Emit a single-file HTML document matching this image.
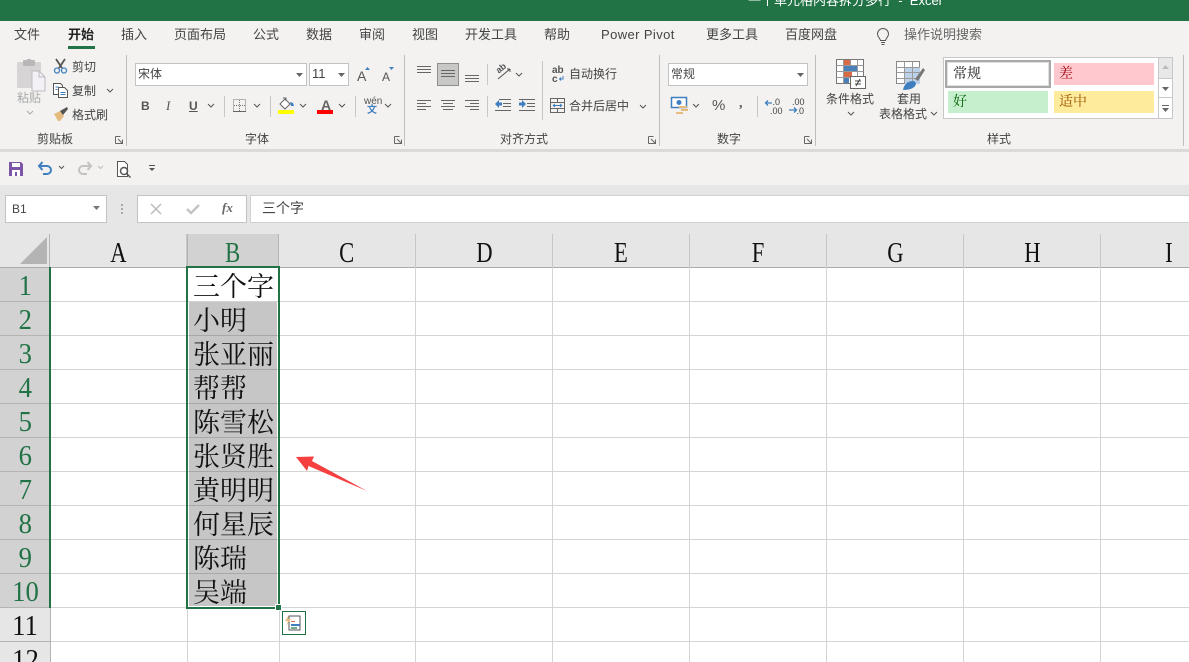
<!DOCTYPE html>
<html lang="zh"><head><meta charset="utf-8"><title>Excel</title>
<style>
*{box-sizing:border-box}
html{margin:0;padding:0;width:1189px;height:662px;overflow:hidden}
body{margin:0;padding:0;width:1189px;height:662px;overflow:hidden;position:relative;background:#fff;font-family:"Liberation Sans","Noto Sans CJK SC",sans-serif}
.a{position:absolute}
.t{position:absolute;font-size:12px;line-height:16px;color:#444;white-space:nowrap;letter-spacing:0}
.tab{position:absolute;top:26px;font-size:13px;line-height:18px;color:#444;white-space:nowrap}
.sep{position:absolute;width:1px;background:#c6c6c6}
.gsep{position:absolute;width:1px;top:55px;height:91px;background:#bdbdbd}
.box{position:absolute;background:#fff;border:1px solid #c3c3c3}
.cell{position:absolute;left:193px;width:88px;font-family:"Noto Serif CJK SC",serif;font-size:27px;line-height:34px;height:34px;color:#111;white-space:nowrap}
.ch{position:absolute;top:234px;height:33px;text-align:center;font-family:"Liberation Serif",serif;font-size:29px;line-height:38px;color:#111;background:#e6e6e6;border-right:1px solid #c6c6c6}
.ch span{display:inline-block;transform:scaleX(.78)}
.rh span{display:inline-block;transform:scaleX(.92)}
.rh{position:absolute;left:0;width:50px;height:34px;text-align:center;font-family:"Liberation Serif",serif;font-size:29px;line-height:36px;color:#111;background:#e6e6e6;border-bottom:1px solid #b4b4b4}
.on{background:#d2d2d2;color:#217346}
.hl{position:absolute;left:50px;width:1139px;height:1px;background:#d4d4d4}
.vl{position:absolute;top:267px;height:395px;width:1px;background:#d4d4d4}
svg{position:absolute;overflow:visible}
</style></head><body>
<div class="a" style="left:0;top:0;width:1189px;height:21px;background:#217346"></div>
<div class="a" style="left:748px;top:-8px;font-size:13px;line-height:18px;color:#fff;white-space:nowrap;font-family:'Liberation Sans','Noto Sans CJK SC',sans-serif">一个单元格内容拆分多行&nbsp; -&nbsp; Excel</div>
<div class="a" style="left:0;top:21px;width:1189px;height:129px;background:#f3f2f1"></div>
<div class="a" style="left:0;top:149px;width:1189px;height:3px;background:#dbdad8"></div>
<div class="a" style="left:0;top:152px;width:1189px;height:33px;background:#f3f2f1"></div>
<div class="a" style="left:0;top:185px;width:1189px;height:49px;background:#e6e6e6"></div>

<div class="tab" style="left:14px">文件</div>
<div class="tab" style="left:68px;color:#222;font-weight:700">开始</div>
<div class="a" style="left:68px;top:46px;width:27px;height:3px;background:#217346"></div>
<div class="tab" style="left:121px">插入</div>
<div class="tab" style="left:174px">页面布局</div>
<div class="tab" style="left:253px">公式</div>
<div class="tab" style="left:306px">数据</div>
<div class="tab" style="left:359px">审阅</div>
<div class="tab" style="left:412px">视图</div>
<div class="tab" style="left:465px">开发工具</div>
<div class="tab" style="left:544px">帮助</div>
<div class="tab" style="left:601px;letter-spacing:.4px">Power Pivot</div>
<div class="tab" style="left:706px">更多工具</div>
<div class="tab" style="left:785px">百度网盘</div>
<div class="tab" style="left:904px;color:#666">操作说明搜索</div>
<svg style="left:876px;top:28px" width="14" height="18" fill="none" stroke="#555"><path d="M4.500 12.500C4 10 1.500 9 1.500 6a5.500 5.500 0 0 1 11 0c0 3-2.500 4-3 6.500zM5 14.500h4M5.500 16.500h3"/></svg>

<div class="gsep" style="left:126px"></div><div class="gsep" style="left:404px"></div><div class="gsep" style="left:659px"></div><div class="gsep" style="left:815px"></div><div class="gsep" style="left:1183px"></div>

<!-- clipboard -->
<svg style="left:16px;top:58px" width="30" height="32"><rect x="1" y="4" width="24" height="26" rx="1" fill="#d6d4d5"/><rect x="7" y="2" width="12" height="6" rx="1" fill="#b9b7b8"/><rect x="11" y="1" width="4" height="3" fill="#b9b7b8"/><path d="M16 13h7l6 6v14H16z" fill="#f3f1f5" stroke="#bdbbc0"/><path d="M23 13v6h6" fill="none" stroke="#bdbbc0"/></svg>
<div class="t" style="left:17px;top:90px;color:#aaa">粘贴</div>
<svg style="left:26px;top:110px" width="9" height="6" fill="none" stroke="#aaa"><path d="M1 1l3 3 3-3"/></svg>
<svg style="left:53px;top:58px" width="16" height="16" fill="none"><path d="M3 1l6 9M12 1L6 10" stroke="#555" stroke-width="1.800"/><circle cx="4" cy="12.500" r="2.500" stroke="#3f7fbf" stroke-width="1.300"/><circle cx="11" cy="12.500" r="2.500" stroke="#3f7fbf" stroke-width="1.300"/></svg>
<div class="t" style="left:72px;top:59px">剪切</div>
<svg style="left:53px;top:83px" width="16" height="15" fill="#fff" stroke="#555"><path d="M.5.500h7l2 2v9H.5z"/><path d="M5.500 4.500h6l3 3v7h-9z"/><path d="M2.500 4h3M2.500 6.500h2M7.500 9.500h5M7.500 11.500h5" stroke="#3f7fbf"/></svg>
<div class="t" style="left:72px;top:83px">复制</div>
<svg style="left:106px;top:88px" width="8" height="5" fill="none" stroke="#555"><path d="M1 1l3 3 3-3"/></svg>
<svg style="left:53px;top:106px" width="16" height="16"><path d="M1 8l6-3 4 5-4 5H5z" fill="#e6bb7e"/><path d="M7 5l7-4 1 2-5 6z" fill="#555"/></svg>
<div class="t" style="left:72px;top:107px">格式刷</div>
<div class="t" style="left:37px;top:131px">剪贴板</div>
<div class="t" style="left:245px;top:131px">字体</div>
<div class="t" style="left:500px;top:131px">对齐方式</div>
<div class="t" style="left:717px;top:131px">数字</div>
<div class="t" style="left:987px;top:131px">样式</div>
<svg style="left:0;top:0" width="1" height="1" fill="none" stroke="#666">
<path d="M115.500 136.500h5M115.500 136.500v7M115.500 143.500h7v-4M118 139l4 4M394.500 136.500h5M394.500 136.500v7M394.500 143.500h7v-4M397 139l4 4M648.500 136.500h5M648.500 136.500v7M648.500 143.500h7v-4M651 139l4 4M804.500 136.500h5M804.500 136.500v7M804.500 143.500h7v-4M807 139l4 4"/></svg>

<!-- font -->
<div class="box" style="left:135px;top:63px;width:172px;height:23px"></div>
<div class="t" style="left:138px;top:66px;font-family:'Noto Sans CJK SC',sans-serif">宋体</div>
<svg style="left:296px;top:73px" width="7" height="4"><path d="M0 0h7L3.500 4z" fill="#666"/></svg>
<div class="box" style="left:309px;top:63px;width:40px;height:23px"></div>
<div class="t" style="left:312px;top:66px;font-size:13px">11</div>
<svg style="left:338px;top:73px" width="7" height="4"><path d="M0 0h7L3.500 4z" fill="#666"/></svg>
<div class="t" style="left:357px;top:68px;font-size:14px;color:#555">A</div><svg style="left:365px;top:67px" width="6" height="4"><path d="M0 3h5L2.500 0z" fill="#3f7fbf"/></svg>
<div class="t" style="left:382px;top:69px;font-size:12px;color:#555">A</div><svg style="left:389px;top:67px" width="6" height="4"><path d="M0 0h5L2.500 3z" fill="#3f7fbf"/></svg>
<div class="t" style="left:141px;top:98px;font-weight:700;color:#555">B</div>
<div class="t" style="left:166px;top:98px;font-style:italic;font-family:'Liberation Serif',serif;font-size:13px;color:#555">I</div>
<div class="t" style="left:189px;top:98px;font-weight:700;text-decoration:underline;color:#555">U</div>
<svg style="left:0;top:0" width="1" height="1" fill="none" stroke="#555"><path d="M208 104l3 3 3-3M254 104l3 3 3-3M300 104l3 3 3-3M339 104l3 3 3-3M385 104l3 3 3-3M693 104l3 3 3-3"/></svg>
<div class="sep" style="left:224px;top:96px;height:21px"></div><div class="sep" style="left:270px;top:96px;height:21px"></div><div class="sep" style="left:355px;top:96px;height:21px"></div>
<svg style="left:233px;top:99px" width="13" height="13" fill="none"><rect x=".5" y=".5" width="12" height="12" stroke="#777" stroke-dasharray="1 1"/><path d="M6.500 1v11M1 6.500h11" stroke="#777" stroke-dasharray="1 1"/><path d="M0 12.500h13" stroke="#666"/></svg>
<svg style="left:278px;top:97px" width="17" height="17"><path d="M7 2l5 5-5 5-5-5z" fill="#fff" stroke="#666"/><path d="M5 1h3v3" fill="none" stroke="#666"/><path d="M12 5l3 1 1 3-3 0z" fill="#3f7fbf"/><rect y="13" width="16" height="4" fill="#ff0"/></svg>
<div class="t" style="left:321px;top:97px;font-size:14px;font-weight:700;color:#666">A</div>
<div class="a" style="left:317px;top:110px;width:16px;height:4px;background:#f00"></div>
<div class="t" style="left:364px;top:96px;font-size:10px;line-height:11px;color:#555">wén</div>
<div class="t" style="left:367px;top:106px;font-size:10px;line-height:10px;color:#3f7fbf;font-weight:700">文</div>

<!-- align -->
<div class="a" style="left:437px;top:63px;width:22px;height:23px;background:#c8c8c6;border:1px solid #8f8f8f"></div>
<svg style="left:0;top:0" width="1" height="1" fill="none" stroke="#666"><path d="M417 66.500h14M417 69.500h14M417 72.500h14M441 70.500h14M441 73.500h14M441 76.500h14M465 75.500h14M465 78.500h14M465 81.500h14M417 100.500h14M417 103.500h9M417 106.500h14M417 109.500h9M441 100.500h14M443 103.500h10M441 106.500h14M443 109.500h10M465 100.500h14M470 103.500h9M465 106.500h14M470 109.500h9M499 99.500h12M503 103.500h8M503 106.500h8M495 110.500h16M519 99.500h16M527 103.500h8M527 106.500h8M519 110.500h16"/></svg>
<svg style="left:495px;top:100px" width="7" height="8"><path d="M0 4l4-4v2.500h3v3H4V8z" fill="#3f7fbf"/></svg>
<svg style="left:519px;top:100px" width="7" height="8"><path d="M7 4L3 0v2.500H0v3h3V8z" fill="#3f7fbf"/></svg>
<div class="sep" style="left:487px;top:64px;height:21px"></div><div class="sep" style="left:487px;top:96px;height:21px"></div><div class="sep" style="left:542px;top:61px;height:59px"></div>
<svg style="left:495px;top:65px" width="17" height="16" fill="none" stroke="#555"><path d="M3 14L15 4M15 4l-3 0M15 4l0 3"/></svg>
<div class="t" style="left:496px;top:63px;font-size:9px;line-height:11px;transform:rotate(-40deg);font-weight:700;color:#555">ab</div>
<svg style="left:515px;top:72px" width="8" height="5" fill="none" stroke="#555"><path d="M1 1l3 3 3-3"/></svg>
<div class="t" style="left:552px;top:66px;font-size:10px;line-height:9px;font-weight:700;color:#555">ab<br>c</div>
<svg style="left:559px;top:76px" width="5" height="5" fill="none" stroke="#3f7fbf"><path d="M4 0v3H1M2 1.500L.500 3 2 4.500"/></svg>
<div class="t" style="left:569px;top:66px">自动换行</div>
<svg style="left:550px;top:98px" width="16" height="15" fill="none" stroke="#666"><rect x=".5" y=".5" width="14" height="14"/><path d="M.5 4.500h14M.5 10.500h14M7.500 .5v4M7.500 10.500v4"/><path d="M3 7.500h9M3 7.500l2-1.500M3 7.500l2 1.500M12 7.500l-2-1.500M12 7.500l-2 1.500" stroke="#3f7fbf"/></svg>
<div class="t" style="left:569px;top:98px">合并后居中</div>
<svg style="left:639px;top:104px" width="8" height="5" fill="none" stroke="#555"><path d="M1 1l3 3 3-3"/></svg>

<!-- number -->
<div class="box" style="left:668px;top:63px;width:140px;height:23px"></div>
<div class="t" style="left:671px;top:66px;font-family:'Noto Sans CJK SC',sans-serif">常规</div>
<svg style="left:797px;top:73px" width="7" height="4"><path d="M0 0h7L3.500 4z" fill="#666"/></svg>
<svg style="left:671px;top:97px" width="17" height="18"><rect x=".5" y=".5" width="15" height="10" fill="#fff" stroke="#3f7fbf" stroke-width="1.500"/><circle cx="8" cy="5.500" r="2.500" fill="#3f7fbf"/><path d="M8 9h8v2H8zM10 12h7v2h-7zM5 15h7v2H5z" fill="#e6bb7e"/></svg>
<div class="t" style="left:712px;top:98px;font-size:15px;color:#555">%</div>
<div class="t" style="left:739px;top:96px;font-size:14px;font-weight:700;color:#555;font-family:'Liberation Serif',serif">,</div>
<div class="sep" style="left:757px;top:96px;height:21px"></div>
<div class="t" style="left:770px;top:98px;font-size:9px;line-height:9px;color:#444;text-align:right;width:10px">.0<br>.00</div>
<svg style="left:765px;top:100px" width="7" height="6" fill="none" stroke="#3f7fbf" stroke-width="1.300"><path d="M7 3H1M3 .5L.5 3 3 5.500"/></svg>
<div class="t" style="left:792px;top:98px;font-size:9px;line-height:9px;color:#444;text-align:right;width:12px">.00<br>.0</div>
<svg style="left:789px;top:107px" width="8" height="6" fill="none" stroke="#3f7fbf" stroke-width="1.300"><path d="M0 3h7M5 .5L7.500 3 5 5.500"/></svg>

<!-- styles -->
<svg style="left:836px;top:59px" width="30" height="36"><rect x=".5" y=".5" width="27" height="24" fill="#fff" stroke="#777"/><path d="M.5 6.500h27M.5 12.500h27M.5 18.500h27M7.500 .5v24M14.500 .5v24M21.500 .5v24" stroke="#999" fill="none"/><rect x="8" y="1" width="6" height="5" fill="#d86b45"/><rect x="8" y="7" width="13" height="5" fill="#4a7fb8"/><rect x="8" y="13" width="8" height="5" fill="#d86b45"/><rect x="8" y="19" width="5" height="5" fill="#4a7fb8"/><rect x="14.500" y="17.500" width="15" height="12" fill="#fff" stroke="#666"/><path d="M19 22h6M19 25h6M24 20l-4 7" stroke="#444" fill="none"/></svg>
<div class="t" style="left:826px;top:91px">条件格式</div>
<svg style="left:847px;top:111px" width="8" height="5" fill="none" stroke="#555"><path d="M1 1l3 3 3-3"/></svg>
<svg style="left:896px;top:61px" width="30" height="29"><rect x=".5" y=".5" width="23" height="22" fill="#fff" stroke="#888"/><rect x="9" y="6" width="15" height="17" fill="#bdd1e8"/><path d="M.5 6.500h23M.5 11.500h23M.5 17.500h23M8.500 .5v22M16.500 .5v22" stroke="#999" fill="none"/><path d="M19 18l8-11 2 2-7 11z" fill="#777"/><path d="M7 29c1-6 5-9 10-9 2 0 3 2 3 3-1 4-6 6-13 6z" fill="#3f7fbf"/></svg>
<div class="t" style="left:897px;top:91px">套用</div>
<div class="t" style="left:879px;top:106px">表格格式</div>
<svg style="left:930px;top:111px" width="8" height="5" fill="none" stroke="#555"><path d="M1 1l3 3 3-3"/></svg>
<div class="a" style="left:943px;top:57px;width:230px;height:62px;background:#fff;border:1px solid #c8c8c8"></div>
<div class="a" style="left:945px;top:60px;width:106px;height:28px;background:#fff;border:2px solid #a8a8a8;box-shadow:inset 0 0 0 1px #e0e0e0"></div>
<div class="a" style="left:1054px;top:63px;width:100px;height:22px;background:#ffc7ce"></div>
<div class="a" style="left:948px;top:91px;width:100px;height:22px;background:#c6efce"></div>
<div class="a" style="left:1054px;top:91px;width:100px;height:22px;background:#ffeb9c"></div>
<div class="t" style="left:953px;top:64px;font-size:14px;line-height:18px;color:#111;font-family:'Noto Serif CJK SC',serif">常规</div>
<div class="t" style="left:1059px;top:64px;font-size:14px;line-height:18px;color:#9c0006;font-family:'Noto Serif CJK SC',serif">差</div>
<div class="t" style="left:953px;top:92px;font-size:14px;line-height:18px;color:#006100;font-family:'Noto Serif CJK SC',serif">好</div>
<div class="t" style="left:1059px;top:92px;font-size:14px;line-height:18px;color:#9c5700;font-family:'Noto Serif CJK SC',serif">适中</div>
<div class="a" style="left:1158px;top:57px;width:15px;height:22px;background:#e8e8e8;border:1px solid #c8c8c8"></div>
<div class="a" style="left:1158px;top:78px;width:15px;height:20px;background:#fff;border:1px solid #c8c8c8"></div>
<div class="a" style="left:1158px;top:97px;width:15px;height:22px;background:#fff;border:1px solid #c8c8c8"></div>
<svg style="left:0;top:0" width="1" height="1"><path d="M1162 69h7l-3.500-4z" fill="#bbb"/><path d="M1162 87h7l-3.500 4z" fill="#666"/><path d="M1162 105h7v1h-7zM1162 108h7l-3.500 4z" fill="#666"/></svg>

<!-- QAT -->
<svg style="left:9px;top:162px" width="15" height="15"><path d="M0 0h12l2 2v12H0z" fill="#7d55a8"/><rect x="3" y="1" width="8" height="4" fill="#fff"/><rect x="3" y="8" width="8" height="6" fill="#fff"/><rect x="6" y="10" width="2" height="4" fill="#7d55a8"/></svg>
<svg style="left:37px;top:161px" width="16" height="15" fill="none" stroke="#3f7fbf" stroke-width="2"><path d="M2 5h8a4 4 0 0 1 0 8H6M5.500 1L2 5l3.500 4"/></svg>
<svg style="left:77px;top:161px" width="16" height="15" fill="none" stroke="#c2c2c2" stroke-width="2"><path d="M14 5H6a4 4 0 0 0 0 8h4M10.500 1L14 5l-3.500 4"/></svg>
<svg style="left:0;top:0" width="1" height="1" fill="none"><path d="M59 166l2.500 2.500L64 166" stroke="#555"/><path d="M98 166l2.500 2.500 2.500-2.500" stroke="#bbb"/><path d="M149 165.500h6" stroke="#555"/><path d="M149 168h6l-3 3z" fill="#555"/></svg>
<svg style="left:117px;top:161px" width="15" height="17" fill="#fff" stroke="#555"><path d="M.5.500h7l3 3v12H.5z"/><circle cx="7" cy="10" r="3.500" stroke-width="1.500"/><path d="M9.500 12.500l4 4" stroke-width="1.500"/></svg>

<!-- formula bar -->
<div class="box" style="left:5px;top:195px;width:102px;height:28px"></div>
<div class="t" style="left:12px;top:201px;color:#444">B1</div>
<svg style="left:93px;top:206px" width="8" height="5"><path d="M0 0h7L3.500 4z" fill="#777"/></svg>
<div class="a" style="left:121px;top:204px;width:2px;height:2px;background:#aaa;box-shadow:0 4px #aaa,0 8px #aaa"></div>
<div class="box" style="left:137px;top:195px;width:110px;height:28px"></div>
<svg style="left:150px;top:203px" width="12" height="12" stroke="#bbb" stroke-width="1.500"><path d="M1 1l10 10M11 1L1 11"/></svg>
<svg style="left:186px;top:204px" width="14" height="11" fill="none" stroke="#c4c4c4" stroke-width="2.500"><path d="M1 5l4 4 8-8"/></svg>
<div class="t" style="left:222px;top:200px;font-family:'Liberation Serif',serif;font-style:italic;font-weight:700;font-size:13px;color:#666">fx</div>
<div class="a" style="left:250px;top:195px;width:945px;height:28px;background:#fff;border:1px solid #d0d0d0"></div>
<div class="t" style="left:262px;top:199px;font-size:14px;line-height:18px;color:#444;font-family:'Noto Sans CJK SC',sans-serif">三个字</div>

<!-- column headers -->
<div class="a" style="left:0;top:234px;width:50px;height:33px;background:#e6e6e6;border-right:1px solid #b4b4b4"></div>
<svg style="left:20px;top:237px" width="28" height="28"><path d="M27 0v27H0z" fill="#b4b4b4"/></svg>
<div class="ch" style="left:50px;width:137px"><span>A</span></div>
<div class="ch" style="left:187px;width:92px;background:#d2d2d2;color:#217346;border-left:1px solid #b4b4b4;border-right:1px solid #b4b4b4"><span>B</span></div>
<div class="ch" style="left:279px;width:137px"><span>C</span></div>
<div class="ch" style="left:416px;width:137px"><span>D</span></div>
<div class="ch" style="left:553px;width:137px"><span>E</span></div>
<div class="ch" style="left:690px;width:137px"><span>F</span></div>
<div class="ch" style="left:827px;width:137px"><span>G</span></div>
<div class="ch" style="left:964px;width:137px"><span>H</span></div>
<div class="ch" style="left:1101px;width:137px"><span>I</span></div>
<div class="a" style="left:0;top:267px;width:1189px;height:1px;background:#ababab"></div>

<!-- grid -->
<div class="hl" style="top:301px"></div><div class="hl" style="top:335px"></div><div class="hl" style="top:369px"></div><div class="hl" style="top:403px"></div><div class="hl" style="top:437px"></div><div class="hl" style="top:471px"></div><div class="hl" style="top:505px"></div><div class="hl" style="top:539px"></div><div class="hl" style="top:573px"></div><div class="hl" style="top:607px"></div><div class="hl" style="top:641px"></div>
<div class="vl" style="left:187px"></div><div class="vl" style="left:279px"></div><div class="vl" style="left:415px"></div><div class="vl" style="left:552px"></div><div class="vl" style="left:689px"></div><div class="vl" style="left:826px"></div><div class="vl" style="left:963px"></div><div class="vl" style="left:1100px"></div>

<!-- row headers -->
<div class="rh on" style="top:268px"><span>1</span></div>
<div class="rh on" style="top:302px"><span>2</span></div>
<div class="rh on" style="top:336px"><span>3</span></div>
<div class="rh on" style="top:370px"><span>4</span></div>
<div class="rh on" style="top:404px"><span>5</span></div>
<div class="rh on" style="top:438px"><span>6</span></div>
<div class="rh on" style="top:472px"><span>7</span></div>
<div class="rh on" style="top:506px"><span>8</span></div>
<div class="rh on" style="top:540px"><span>9</span></div>
<div class="rh on" style="top:574px"><span>10</span></div>
<div class="rh" style="top:608px"><span>11</span></div>
<div class="rh" style="top:642px"><span>12</span></div>
<div class="a" style="left:50px;top:267px;width:1px;height:395px;background:#b4b4b4"></div>

<!-- selection -->
<div class="a" style="left:189px;top:302px;width:88px;height:304px;background:repeating-linear-gradient(#c6c6c6 0,#c6c6c6 33px,#a8a8a8 33px,#a8a8a8 34px)"></div>
<div class="cell" style="top:268px">三个字</div>
<div class="cell" style="top:302px">小明</div>
<div class="cell" style="top:336px">张亚丽</div>
<div class="cell" style="top:370px">帮帮</div>
<div class="cell" style="top:404px">陈雪松</div>
<div class="cell" style="top:438px">张贤胜</div>
<div class="cell" style="top:472px">黄明明</div>
<div class="cell" style="top:506px">何星辰</div>
<div class="cell" style="top:540px">陈瑞</div>
<div class="cell" style="top:574px">吴端</div>
<div class="a" style="left:186px;top:266px;width:94px;height:343px;border:2px solid #217346"></div>
<div class="a" style="left:49px;top:267px;width:2px;height:341px;background:#217346"></div>
<div class="a" style="left:275px;top:604px;width:7px;height:7px;background:#217346;border:1px solid #fff"></div>

<!-- flash fill -->
<div class="a" style="left:282px;top:611px;width:24px;height:24px;background:#fff;border:1px solid #217346"></div>
<svg style="left:285px;top:615px" width="18" height="17"><path d="M4 1h11v14H4z" fill="#fff" stroke="#555"/><path d="M6 6h4v1H6z" fill="#d86b45"/><path d="M6 9h9v2H6z" fill="#3f7fbf"/><path d="M6 12h6v2H6z" fill="#6fa98f"/><path d="M4 0L0 6h3L1 11l5-7H3z" fill="#e6bb7e"/></svg>

<!-- arrow -->
<svg style="left:0;top:0" width="1" height="1"><path d="M296 457L314 456.500 312 461 367 491 308.500 466 307 471z" fill="#f63f3f"/></svg>
</body></html>
